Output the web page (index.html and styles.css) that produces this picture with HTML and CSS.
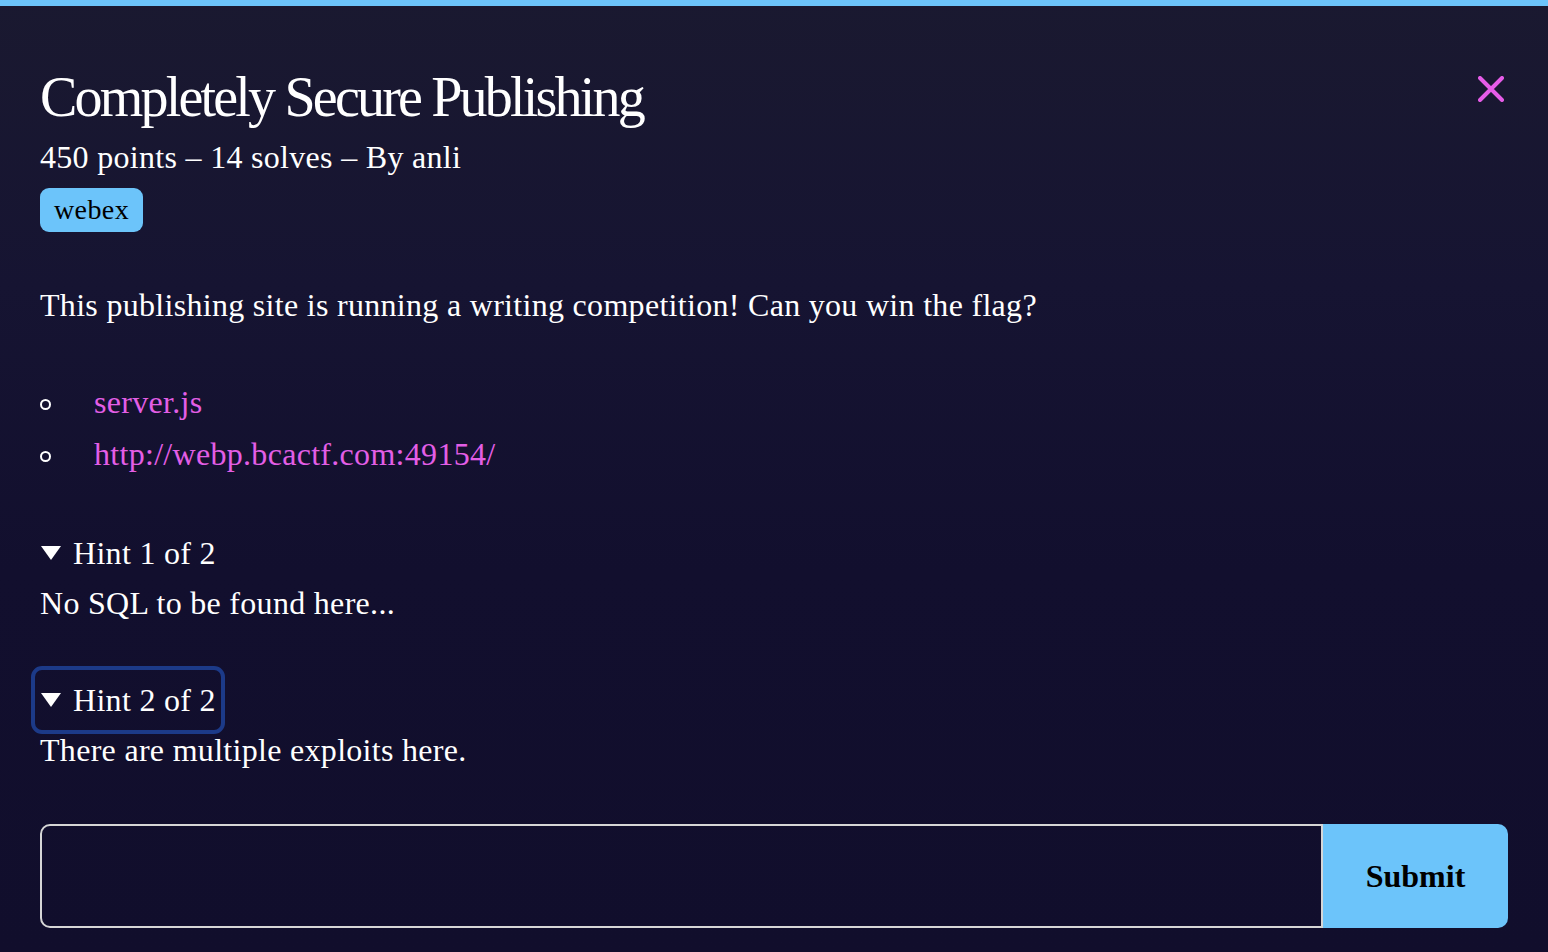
FILE: index.html
```html
<!DOCTYPE html>
<html lang="en">
<head>
<meta charset="utf-8">
<title>Completely Secure Publishing</title>
<link rel="stylesheet" href="styles.css">
</head>
<body>
<div class="topbar"></div>
<main class="modal">
  <header class="head">
    <div class="titles">
      <h1 class="title">Completely Secure Publishing</h1>
      <p class="meta">450 points – 14 solves – By anli</p>
      <span class="tag">webex</span>
    </div>
    <button class="close" aria-label="Close">
      <svg width="26" height="26" viewBox="0 0 26 26"><path d="M2 2 L24 24 M24 2 L2 24" stroke="#e65ce8" stroke-width="4" stroke-linecap="round" fill="none"/></svg>
    </button>
  </header>
  <p class="desc">This publishing site is running a writing competition! Can you win the flag?</p>
  <ul class="files">
    <li><a href="#">server.js</a></li>
    <li><a href="#">http://webp.bcactf.com:49154/</a></li>
  </ul>
  <details class="hint" open>
    <summary><svg class="tri" width="22" height="16" viewBox="0 0 22 16"><path d="M1 1 H21 L11 15 Z" fill="#fff"/></svg>Hint 1 of 2</summary>
    <p class="hint-text">No SQL to be found here...</p>
  </details>
  <details class="hint" open>
    <summary class="focused"><svg class="tri" width="22" height="16" viewBox="0 0 22 16"><path d="M1 1 H21 L11 15 Z" fill="#fff"/></svg>Hint 2 of 2</summary>
    <p class="hint-text">There are multiple exploits here.</p>
  </details>
  <form class="flag">
    <input class="flag-input" type="text" aria-label="Flag">
    <button class="submit" type="button">Submit</button>
  </form>
</main>
</body>
</html>
```

FILE: styles.css
```css
html, body {
  margin: 0;
  padding: 0;
}
body {
  min-height: 952px;
  background: linear-gradient(180deg, #1a1930 0%, #161432 30%, #120f2e 60%, #110e2c 100%);
  color: #ffffff;
  font-family: "Liberation Serif", "Times New Roman", serif;
  overflow: hidden;
}
.topbar {
  height: 6px;
  background: #6cc4fa;
}
.modal {
  padding: 59px 40px 0 40px;
}
.head {
  display: flex;
  justify-content: space-between;
  align-items: flex-start;
}
.titles {
  display: flex;
  flex-direction: column;
  align-items: flex-start;
}
.title {
  margin: 0;
  font-weight: normal;
  font-size: 56px;
  line-height: 64px;
  letter-spacing: -2.8px;
}
.meta {
  margin: 8px 0 0 0;
  font-size: 32px;
  line-height: 40px;
  letter-spacing: 0.3px;
}
.tag {
  margin-top: 11px;
  height: 44px;
  line-height: 44px;
  padding: 0 14px;
  border-radius: 9px;
  background: #6cc4fa;
  color: #000;
  font-size: 28px;
  letter-spacing: 0.4px;
}
.close {
  margin: 11px 4px 0 0;
  padding: 0;
  border: 0;
  background: transparent;
  width: 26px;
  height: 26px;
  display: flex;
}
.desc {
  margin: 53px 0 0 0;
  font-size: 32px;
  line-height: 40px;
  letter-spacing: 0.3px;
}
.files {
  margin: 51px 0 0 0;
  padding: 0;
  list-style: none;
}
.files li {
  display: flex;
  align-items: center;
  font-size: 32px;
  line-height: 52px;
  letter-spacing: 0.3px;
}
.files li::before {
  content: "";
  width: 7px;
  height: 7px;
  border: 2px solid #fff;
  border-radius: 50%;
  margin: 4px 43px 0 0;
}
.files a {
  color: #e35ee6;
  text-decoration: none;
}
.hint {
  margin-top: 48px;
  font-size: 32px;
  line-height: 50px;
  letter-spacing: 0.3px;
}
.hint + .hint {
  margin-top: 47px;
}
.hint summary {
  list-style: none;
  width: fit-content;
  display: flex;
  align-items: center;
  border-radius: 2px;
}
.hint summary::-webkit-details-marker {
  display: none;
}
.tri {
  margin: 0 11px 0 0;
}
.hint summary.focused {
  outline: 4px solid #1c3a88;
  outline-offset: 5px;
}
.hint-text {
  margin: 0;
}
.flag {
  margin-top: 49px;
  display: flex;
  height: 104px;
}
.flag-input {
  flex: 1;
  margin: 0;
  box-sizing: border-box;
  height: 104px;
  border: 2px solid #d6d6d6;
  border-radius: 10px 0 0 10px;
  background: transparent;
  color: #fff;
  font-family: inherit;
  font-size: 32px;
  padding: 0 16px;
}
.submit {
  width: 185px;
  height: 104px;
  margin: 0;
  border: 0;
  border-radius: 0 10px 10px 0;
  background: #6cc4fa;
  color: #000;
  font-family: "Liberation Serif", "Times New Roman", serif;
  font-weight: bold;
  font-size: 32px;
}
```
